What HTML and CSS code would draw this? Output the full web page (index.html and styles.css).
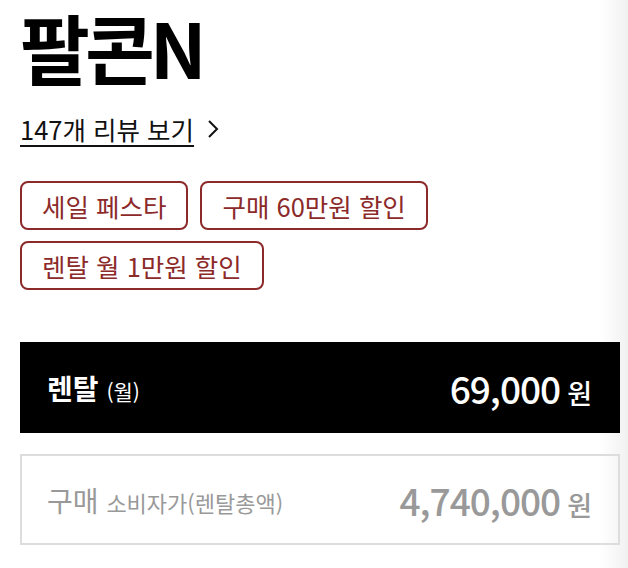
FILE: index.html
```html
<!DOCTYPE html>
<html lang="ko">
<head>
    <meta charset="UTF-8">
    <meta name="viewport" content="width=device-width, initial-scale=1.0">
    <title>팔콘N</title>
    <link rel="stylesheet" href="styles.css">
</head>
<body>

    <div class="product">
        <!-- Title -->
        <h1 class="product-name">팔콘N</h1>

        <!-- Review link -->
        <a class="review-link" href="#">
            <span class="review-text">147개 리뷰 보기</span>
            <svg class="chevron" width="12" height="20" viewBox="0 0 12 20">
                <path d="M2 2 L10 10 L2 18" fill="none" stroke="#111" stroke-width="2"/>
            </svg>
        </a>

        <!-- Benefit tags -->
        <div class="tags">
            <span class="tag">세일 페스타</span>
            <span class="tag">구매 60만원 할인</span>
            <span class="tag">렌탈 월 1만원 할인</span>
        </div>

        <!-- Prices -->
        <div class="price-box rental">
            <div class="price-label">렌탈 <small>(월)</small></div>
            <div class="price-value">69,000<span class="won">원</span></div>
        </div>

        <div class="price-box buy">
            <div class="price-label">구매 <small>소비자가(렌탈총액)</small></div>
            <div class="price-value">4,740,000<span class="won">원</span></div>
        </div>
    </div>

</body>
</html>
```

FILE: styles.css
```css
body, html {
    margin: 0;
    padding: 0;
    font-family: "Noto Sans CJK KR", "Noto Sans", sans-serif;
    color: #111;
}

body {
    background: linear-gradient(to right, #fff 600px, #f1f1f1 628px);
    height: 568px;
}

.product {
    width: 600px;
    padding: 0 0 0 20px;
}

.product-name {
    font-size: 76px;
    font-weight: bold;
    letter-spacing: -5px;
    line-height: 1.2;
    margin: 0;
    padding-top: 1px;
    color: #000;
}

.review-link {
    display: inline-flex;
    align-items: center;
    margin-top: 22px;
    color: #111;
    text-decoration: none;
}

.review-text {
    font-size: 25.5px;
    line-height: 30px;
    text-decoration: underline;
    text-underline-offset: 5px;
    text-decoration-thickness: 2px;
}

.chevron {
    margin-left: 13px;
}

.tags {
    display: flex;
    flex-wrap: wrap;
    gap: 11px 12px;
    margin-top: 36px;
    width: 460px;
}

.tag {
    display: inline-block;
    border: 2px solid #8c2a2a;
    border-radius: 8px;
    color: #8c2a2a;
    font-size: 25.5px;
    line-height: 45px;
    padding: 0 20px;
}

.price-box {
    display: flex;
    justify-content: space-between;
    align-items: center;
    height: 91px;
    box-sizing: border-box;
    padding: 0 28px 0 27px;
}

.price-box.rental {
    margin-top: 52px;
    background-color: #000;
    color: #fff;
}

.price-box.buy {
    margin-top: 21px;
    border: 2px solid #ddd;
    color: #999;
    padding: 0 26px 0 25px;
}

.price-label {
    font-size: 28px;
    font-weight: bold;
}

.price-label small {
    font-size: 21px;
    font-weight: normal;
}

.buy .price-label {
    font-weight: normal;
}

.buy .price-label small {
    font-size: 22px;
}

.price-value {
    font-size: 37px;
    font-weight: 500;
    letter-spacing: -1px;
}

.won {
    font-size: 27px;
    letter-spacing: 0;
    margin-left: 7px;
}
```
